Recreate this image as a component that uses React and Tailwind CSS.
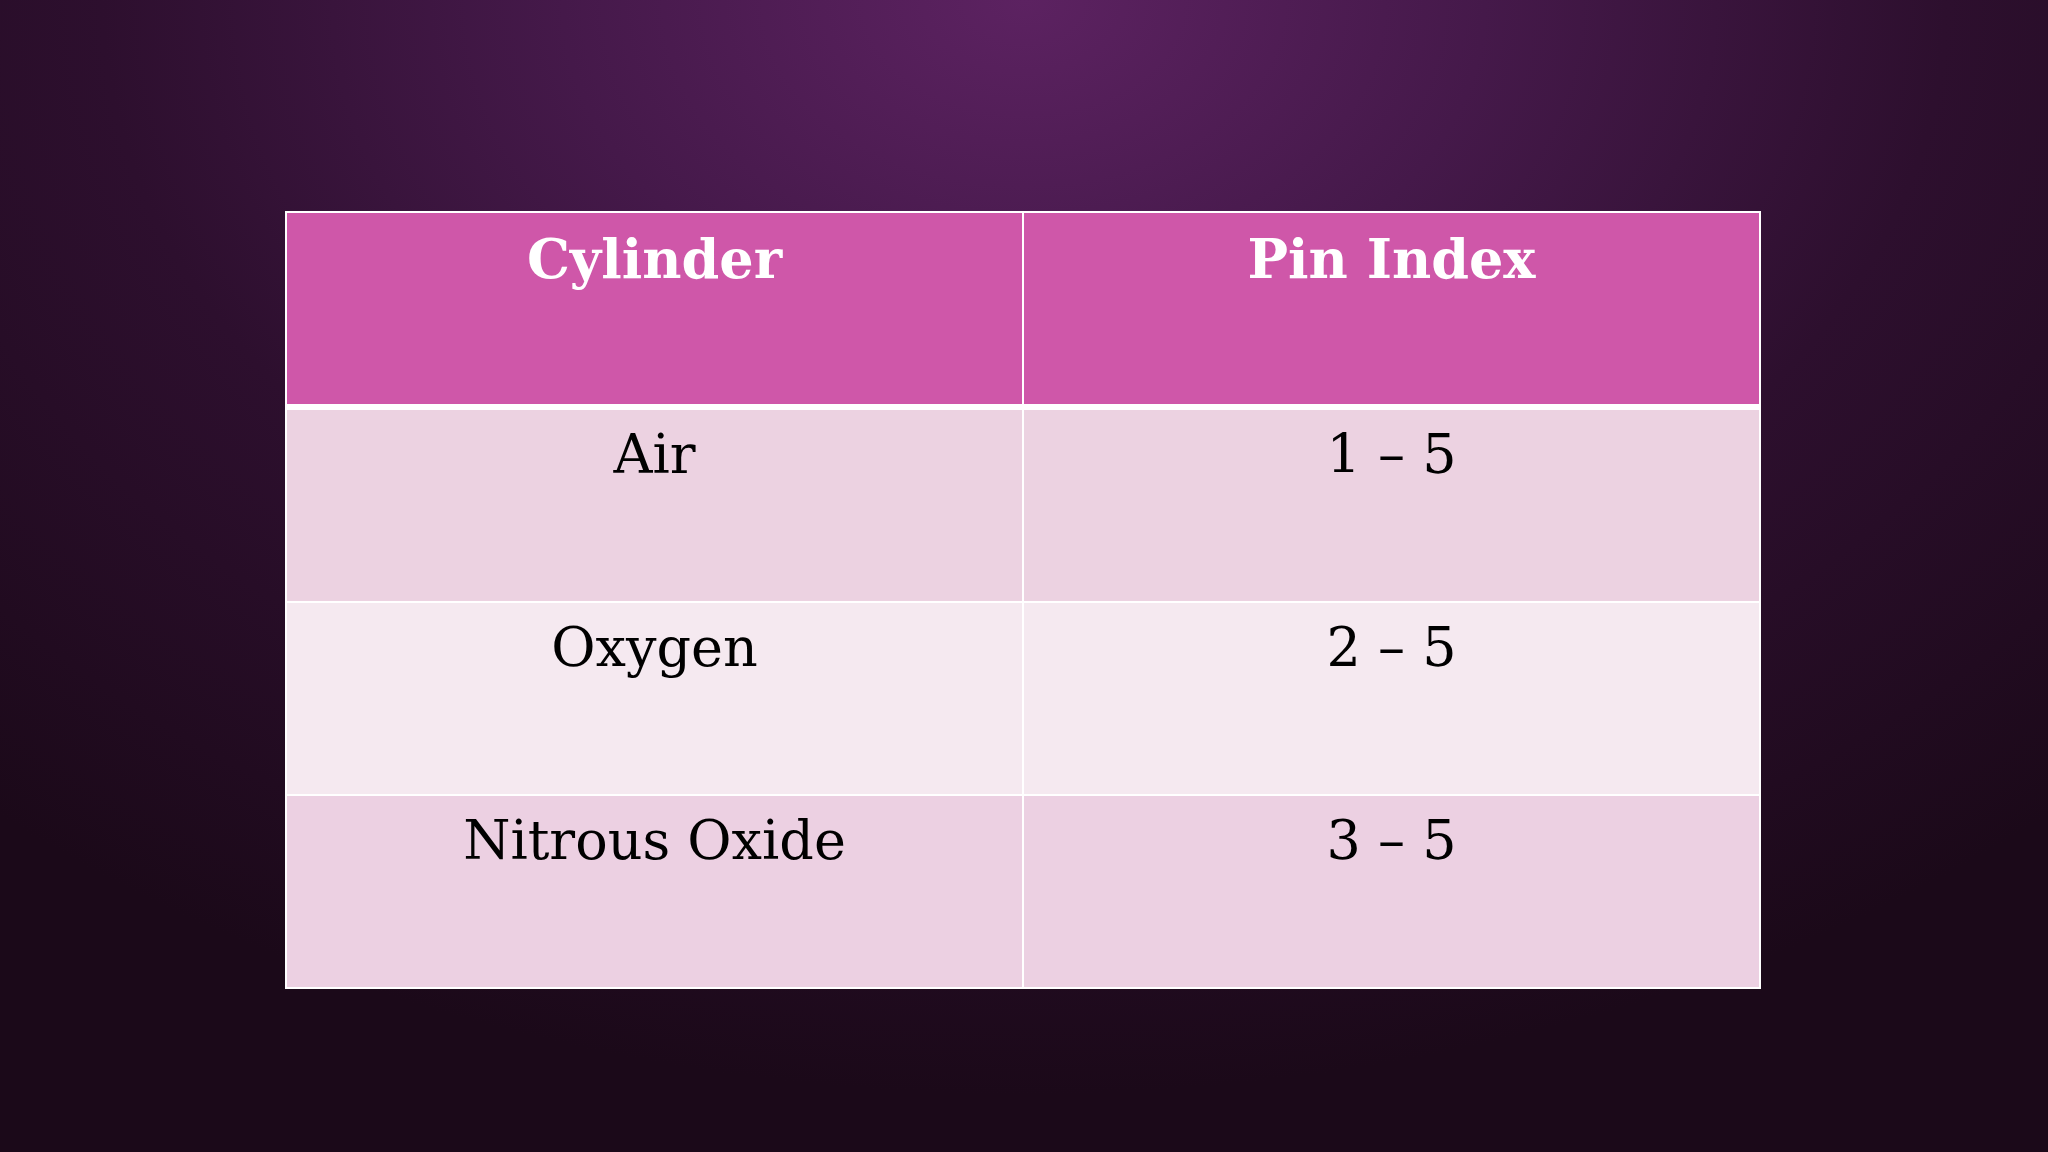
export default function App() {
  const rows = [
    ["Air", "1 – 5", "bg-[#ecd2e1]"],
    ["Oxygen", "2 – 5", "bg-[#f5e9f0]"],
    ["Nitrous Oxide", "3 – 5", "bg-[#ecd0e2]"],
  ];
  return (
    <div
      className="w-[2048px] h-[1152px] overflow-hidden pt-[211px] pl-[285px]"
      style={{
        background:
          "radial-gradient(ellipse 75% 95% at 50% 0%, #5c2261 0%, #45194a 30%, #2d0f2e 60%, #1b0919 100%)",
        fontFamily: '"DejaVu Serif", "Liberation Serif", serif',
      }}
    >
      <div className="w-[1476px] bg-white p-[2px] flex flex-col">
        <div className="grid grid-cols-[735px_735px] gap-x-[2px]">
          <div className="h-[191px] bg-[#cf57a9] text-white font-bold text-[54px] leading-none text-center pt-[19px]">
            Cylinder
          </div>
          <div className="h-[191px] bg-[#cf57a9] text-white font-bold text-[54px] leading-none text-center pt-[19px]">
            Pin Index
          </div>
        </div>
        {rows.map(([a, b, bg], i) => (
          <div
            key={a}
            className={
              "grid grid-cols-[735px_735px] gap-x-[2px] " +
              (i === 0 ? "mt-[6px]" : "mt-[2px]")
            }
          >
            <div className={"h-[191px] text-black text-[54px] leading-none text-center pt-[18px] " + bg}>
              {a}
            </div>
            <div className={"h-[191px] text-black text-[54px] leading-none text-center pt-[18px] " + bg}>
              {b}
            </div>
          </div>
        ))}
      </div>
    </div>
  );
}
